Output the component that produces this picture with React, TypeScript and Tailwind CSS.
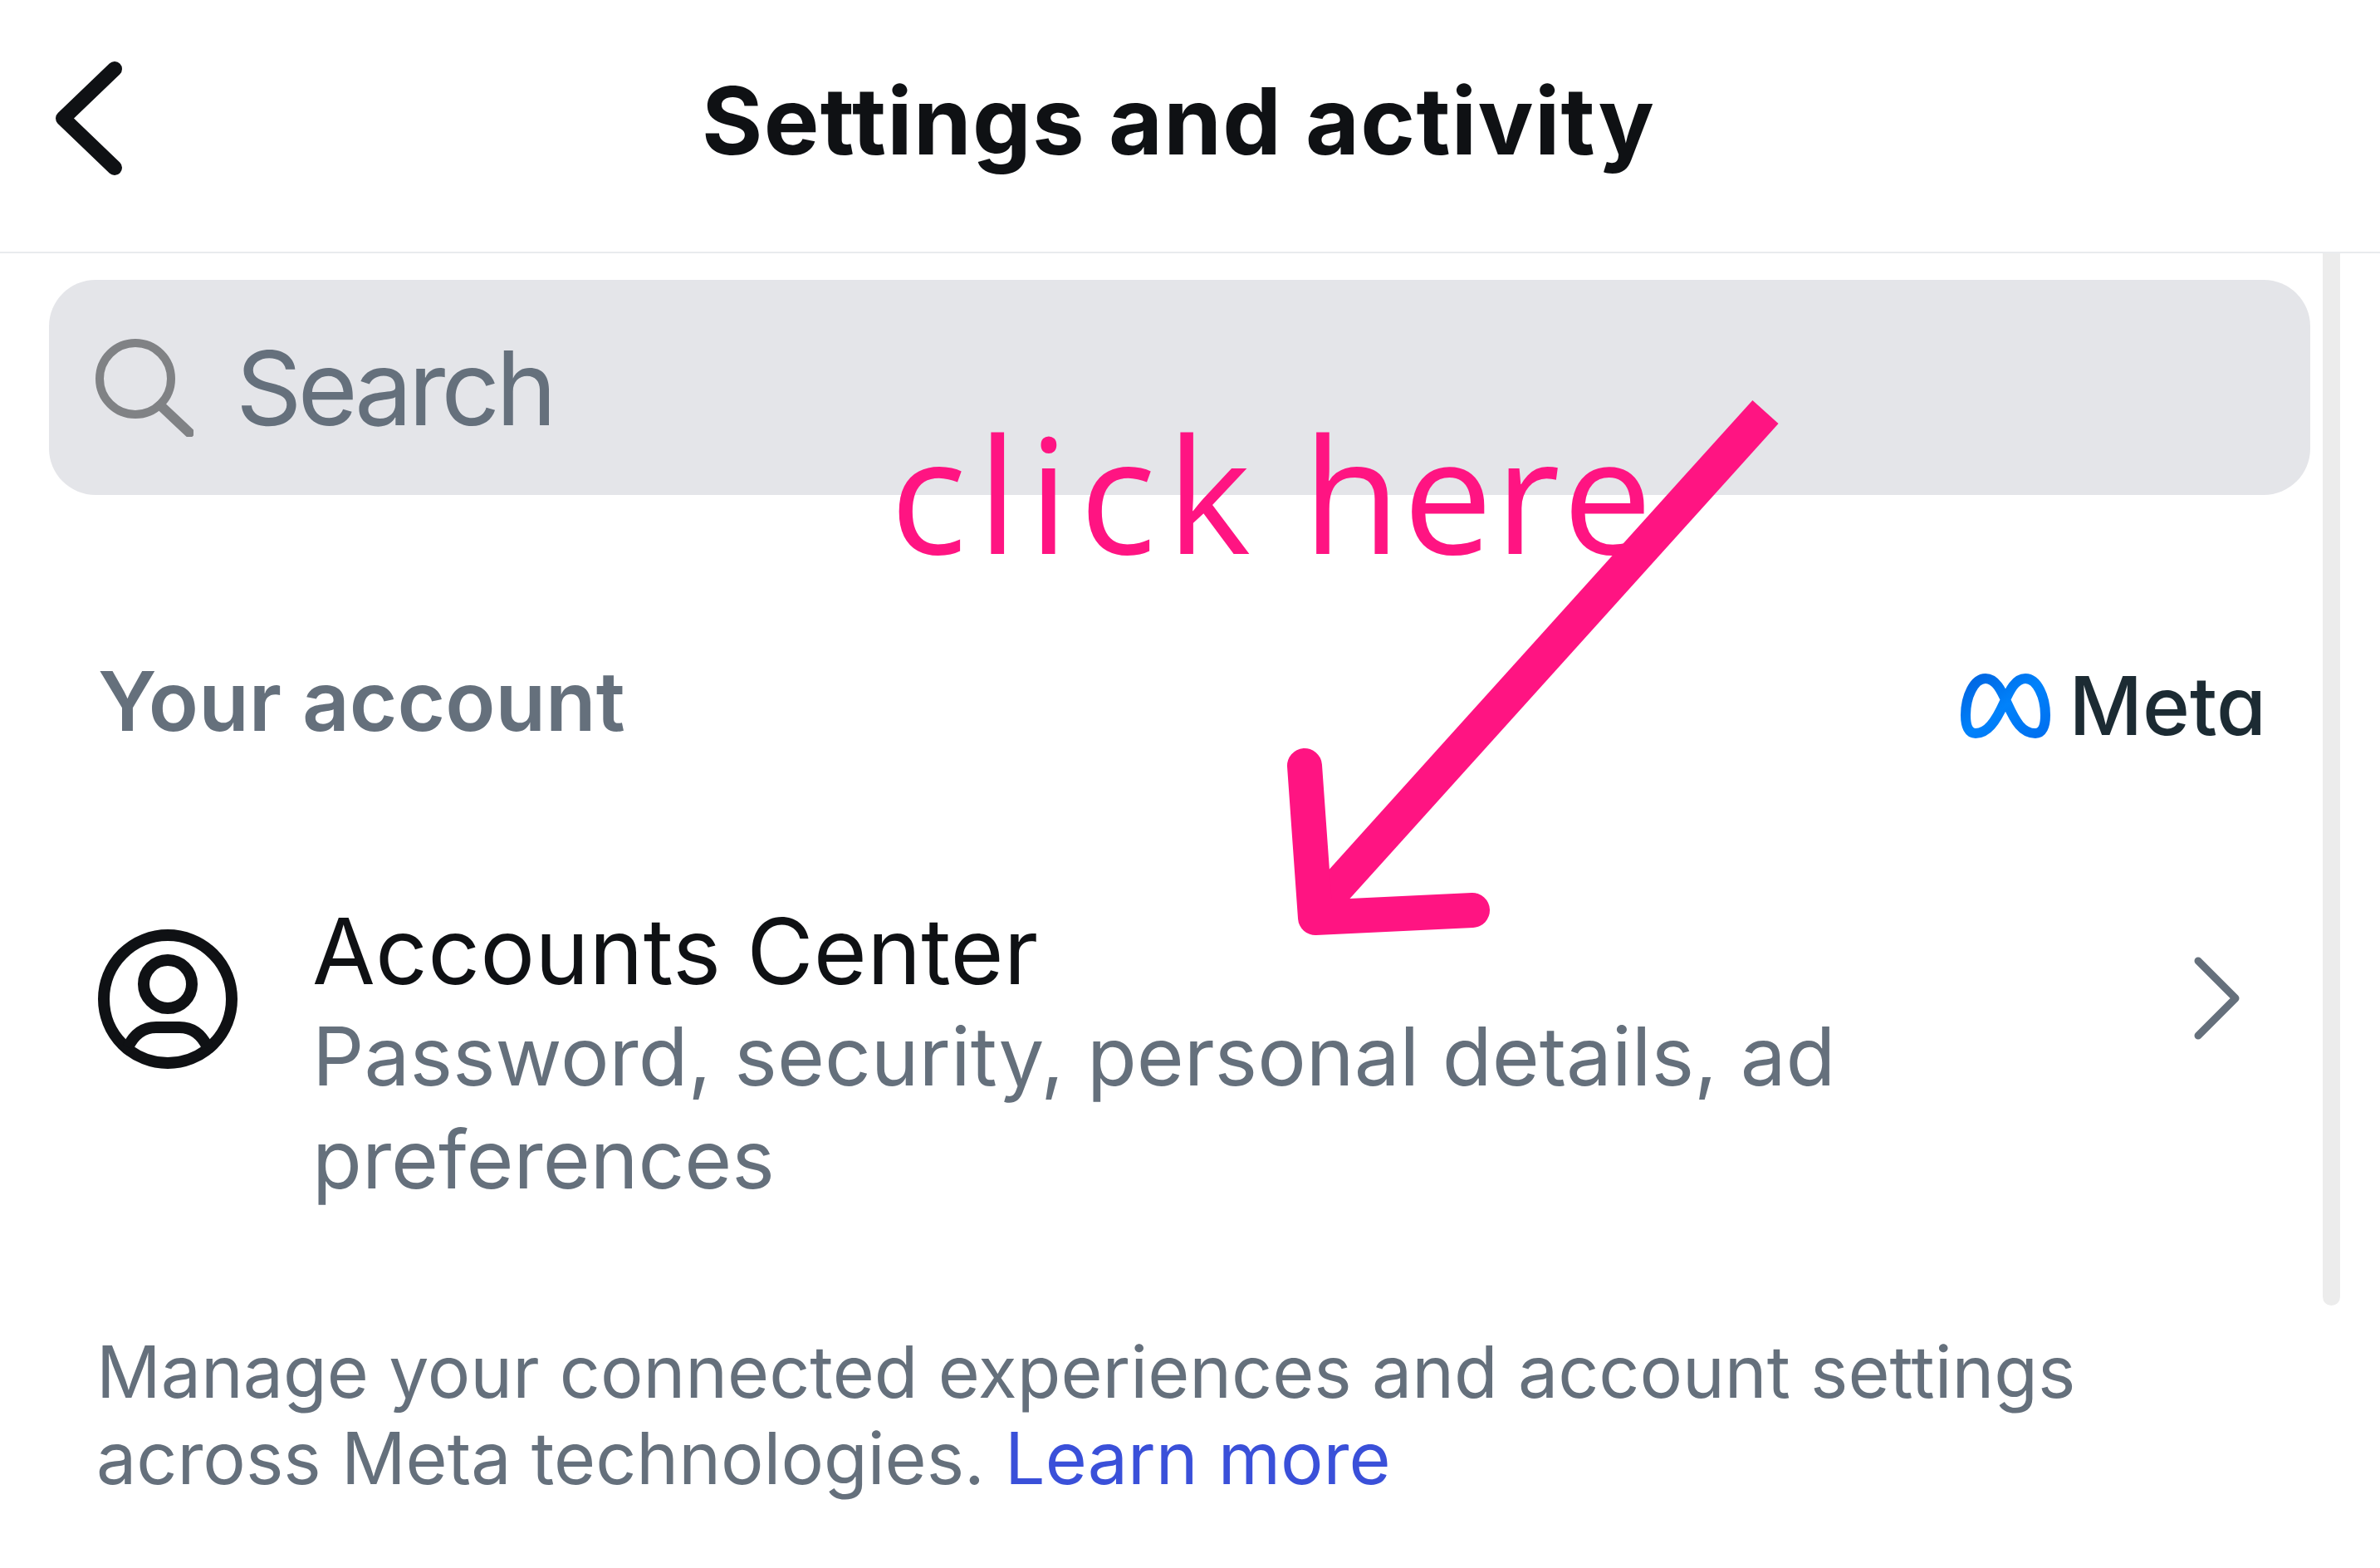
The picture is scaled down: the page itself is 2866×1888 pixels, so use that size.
export default function App() {
  return (
    <div className="relative h-[1888px] w-[2866px] overflow-hidden bg-white font-['Inter','Liberation_Sans',sans-serif]">
      <header className="flex h-[305px] items-center border-b-2 border-[#e9ebee] pb-[14px] pl-[67px]">
        <svg width="80" height="137" viewBox="0 0 80 137" fill="none" stroke="#0f1114" strokeWidth="18" strokeLinecap="round" strokeLinejoin="round" className="mb-[4px] shrink-0">
          <path d="M71 9 L9 68.500 L71 128" />
        </svg>
        <h1 className="ml-[698px] text-[112px] leading-none font-bold tracking-[1.300px] text-[#0f1114]">Settings and activity</h1>
      </header>

      <div className="absolute top-[305px] left-[2797px] h-[1267px] w-[21px] rounded-b-full bg-[#ececec]" />

      <main className="flex flex-col">
        <div className="mt-[32px] ml-[59px] flex h-[259px] w-[2723px] items-center rounded-[56px] bg-[#e4e5e9] pl-[56px]">
          <svg width="118" height="118" viewBox="0 0 118 118" fill="none" stroke="#808285" strokeWidth="10" strokeLinecap="round" className="shrink-0">
            <circle cx="48" cy="48" r="43" />
            <path d="M78 80 L113 113" strokeWidth="12" />
          </svg>
          <span className="ml-[51px] text-[124px] leading-none tracking-[-5px] text-[#65707c]">Search</span>
        </div>

        <div className="mt-[199px] ml-[118px] flex h-[99px] w-[2611px] items-center justify-between">
          <span className="text-[99px] leading-none font-semibold text-[#65707c]">Your account</span>
          <div className="mt-[10px] flex items-center gap-[22px]">
            <svg width="108" height="78" viewBox="0 0 108 78" fill="none" stroke="url(#metaGrad)" strokeWidth="12" className="shrink-0">
              <defs>
                <linearGradient id="metaGrad" x1="0" y1="0" x2="1" y2="1">
                  <stop offset="0" stopColor="#0064e0" />
                  <stop offset="0.5" stopColor="#0082fb" />
                  <stop offset="1" stopColor="#0070f0" />
                </linearGradient>
              </defs>
              <path d="M30 6 C42 6 49 20 56 36 C66 58 74 72 90 72 C98 72 102 64 102 50 C102 28 92 6 78 6 C66 6 59 20 52 36 C42 58 32 72 18 72 C10 72 6 64 6 50 C6 28 16 6 30 6 Z" />
            </svg>
            <span className="text-[97px] leading-none font-medium [font-feature-settings:'cv11'] text-[#1c2b33]">Meta</span>
          </div>
        </div>

        <div className="mt-[189px] ml-[118px] flex w-[2580px] items-start">
          <svg width="168" height="170" viewBox="0 0 168 170" fill="none" stroke="#0f1114" strokeWidth="14" className="mt-[35px] shrink-0">
            <circle cx="84" cy="85" r="77" />
            <circle cx="84" cy="67" r="29" />
            <path d="M36 143 C44 126 56 119 70 119 L98 119 C112 119 124 126 132 143" />
          </svg>
          <div className="ml-[90px] flex w-[2100px] flex-col">
            <span className="text-[110px] leading-[124px] tracking-[0.2px] text-[#0f1114]">Accounts Center</span>
            <span className="mt-[3px] text-[97.800px] leading-[124px] text-[#65707c]">Password, security, personal details, ad preferences</span>
          </div>
          <svg width="56" height="100" viewBox="0 0 56 100" fill="none" stroke="#65707c" strokeWidth="9" strokeLinecap="round" strokeLinejoin="round" className="mt-[69px] ml-auto shrink-0">
            <path d="M5 5 L50 50 L5 95" />
          </svg>
        </div>

        <p className="mt-[142px] ml-[116px] w-[2520px] text-[86px] leading-[104px] text-[#65707c]">
          Manage your connected experiences and account settings across Meta technologies. <span className="text-[#3a50d9]">Learn more</span>
        </p>
      </main>

      <span className="absolute top-[460px] left-[1072px] font-['Open_Sans',sans-serif] text-[192px] leading-[266px] font-normal whitespace-nowrap text-[#ff1482]">
        <span className="tracking-[13px]">click</span> <span className="tracking-[3px]">here</span>
      </span>
      <svg className="absolute top-0 left-0" width="2866" height="1888" fill="none" stroke="#ff1482" strokeWidth="42">
        <path d="M2126 496 L1590 1090" />
        <path d="M1571 922 L1584 1105 L1773 1096" strokeLinecap="round" strokeLinejoin="round" />
      </svg>
    </div>
  );
}
